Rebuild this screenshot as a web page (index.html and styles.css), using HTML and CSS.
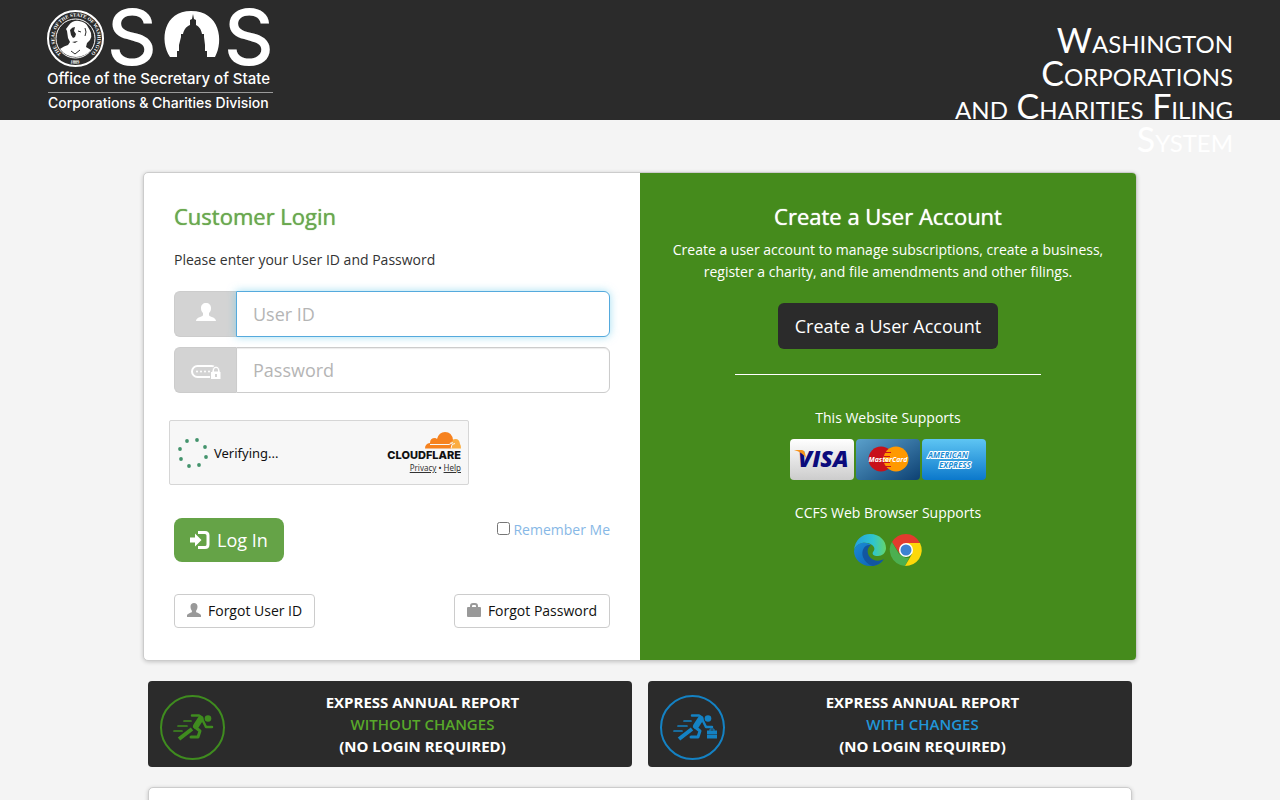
FILE: index.html
```html
<!DOCTYPE html>
<html lang="en">
<head>
    <meta charset="UTF-8">
    <meta name="viewport" content="width=device-width, initial-scale=1">
    <title>Corporations and Charities Filing System</title>
    <link rel="stylesheet" href="styles.css">
</head>
<body>

<header class="header">
    <a href="#" class="logo" aria-label="Office of the Secretary of State">
        <svg width="230" height="106" viewBox="0 0 230 106">
            <defs>
                <path id="ring" d="M14.500 47A21.500 21.500 0 1 1 43.500 47"/>
                <path id="ringYear" d="M21 55.500Q28 58 35 55.500"/>
            </defs>
            <!-- state seal -->
            <circle cx="28.500" cy="31.500" r="27.500" fill="#2b2b2b" stroke="#fff" stroke-width="2"/>
            <circle cx="28.500" cy="31.500" r="19.500" fill="#2b2b2b" stroke="#fff"/>
            <text class="seal-text"><textPath href="#ring">THE SEAL OF THE STATE OF WASHINGTON</textPath></text>
            <text class="seal-text"><textPath href="#ringYear" startOffset="2">1889</textPath></text>
            <path fill="#fff" d="M22 18q4-5 10-4 7 1 9 6 2 3 3 6 1 4-1 7l-3 3-1 4 5 3q-6 7-15 7-10 0-16-8 4-3 8-4l2-3-2-4-1-7-1-2z"/>
            <path fill="#2b2b2b" d="M23 23q2-3 5-3l-1 4 2 3-1 3-2 1-2-3zM25 35l6-1-3 2z"/>
            <path fill="none" stroke="#2b2b2b" d="M31 24l3 1M38 21q2 4 0 8M24 44l4 3 5-4"/>
            <text class="logo-letter" x="60" y="58">S</text>
            <path fill="#fff" d="M123 50c-11-17-6-46 21-46 29 0 33 30 24 46h-8v-6h-2v-6l-1-8v-3h-2c-1-6-4-8-6-9v-5l-2-1-1-5-1 5-2 1v5c-3 1-6 4-7 9h-2v3l-2 8v6h-2v6z"/>
            <text class="logo-letter" x="177" y="58">S</text>
            <text class="logo-line" x="0" y="77">Office of the Secretary of State</text>
            <path stroke="#9a9a9a" d="M1 85.500h225"/>
            <text class="logo-line logo-division" x="1" y="101">Corporations &amp; Charities Division</text>
        </svg>
    </a>
    <div class="site-title">Washington<br>Corporations<br>and Charities Filing<br>System</div>
</header>

<main>
    <div class="login-card">
        <section class="login">
            <h1>Customer Login</h1>
            <p class="intro">Please enter your User ID and Password</p>
            <form>
                <div class="input-group">
                    <label class="addon" for="userId" aria-label="User ID">
                        <svg width="20" height="20" viewBox="0 0 20 20" fill="#fff"><path d="M10 0c3 0 5 2 5 5 0 3-1 4-2 5v2c0 2 7 2 7 6H0c0-4 7-4 7-6v-2C6 9 5 8 5 5c0-3 2-5 5-5z"/></svg>
                    </label>
                    <input type="text" id="userId" placeholder="User ID" autofocus>
                </div>
                <div class="input-group">
                    <label class="addon addon-password" for="password" aria-label="Password">
                        <svg width="30" height="16" viewBox="0 0 30 16">
                            <rect x="1" y="2" width="25" height="11" rx="5.500" fill="none" stroke="#fff" stroke-width="2"/>
                            <g fill="#fff"><circle cx="6" cy="7.500" r="1"/><circle cx="10" cy="7.500" r="1"/><circle cx="14" cy="7.500" r="1"/><circle cx="18" cy="7.500" r="1"/></g>
                            <path fill="#fff" stroke="#d3d3d3" d="M19.500 15.500v-8h1.500V6q1-4 4-4t4 4v1.500h1v8z"/>
                            <path fill="#d3d3d3" d="M23 7.500V6q0-2 2-2t2 2v1.500zM24 10h2v3h-2z"/>
                        </svg>
                    </label>
                    <input type="password" id="password" placeholder="Password">
                </div>

                <div class="turnstile">
                    <svg width="32" height="32" viewBox="0 0 32 32" fill="#43936c">
                        <circle cx="9" cy="4" r="1.900"/><circle cx="19" cy="3" r="1.900"/><circle cx="27" cy="10" r="1.900"/><circle cx="28" cy="20" r="1.900"/>
                        <circle cx="21" cy="28" r="1.900"/><circle cx="11" cy="29" r="1.900"/><circle cx="3" cy="22" r="1.900"/><circle cx="2" cy="12" r="1.900"/>
                    </svg>
                    <span class="verifying">Verifying...</span>
                    <div class="cloudflare">
                        <svg class="cloud" width="36" height="17" viewBox="0 0 36 17">
                            <path fill="#fbad41" d="M25 16.500L27 8q7-3 8 4 1 1 1 4.500z"/>
                            <path fill="#f6821f" d="M0 16.500q0-5 5-5.500 0-5 5-5 1 0 2 1 2-7 8-7 7 0 8 8-1 2-3 3l2 1-1 4.500z"/>
                            <path stroke="#f7f7f7" d="M5 12.500h19l4-2M26 16.500l1-4 3-1" fill="none"/>
                        </svg>
                        <span class="brand">CLOUDFLARE</span>
                        <span class="links"><a href="#">Privacy</a> • <a href="#">Help</a></span>
                    </div>
                </div>

                <div class="row">
                    <button type="submit" class="btn-login">
                        <svg width="20" height="18" viewBox="0 0 20 18"><path fill="#fff" d="M0 6.500h5V2.500l6.500 6.500L5 15.500v-4H0z"/><path fill="none" stroke="#fff" stroke-width="3" d="M8 1.500h7q3 0 3 3v9q0 3-3 3H8"/></svg>
                        Log In
                    </button>
                    <label class="remember"><input type="checkbox"> Remember Me</label>
                </div>
                <div class="row forgot">
                    <button type="button" class="btn-default">
                        <svg width="14" height="14" viewBox="0 0 20 20" fill="#999"><path d="M10 0c3 0 5 2 5 5 0 3-1 5-2 6v2c0 1 7 2 7 5v2H0v-2c0-3 7-4 7-5v-2c-1-1-2-3-2-6 0-3 2-5 5-5z"/></svg>
                        Forgot User ID
                    </button>
                    <button type="button" class="btn-default">
                        <svg width="14" height="14" viewBox="0 0 14 14"><path fill="none" stroke="#999" stroke-width="2" d="M4 6V3q0-2 2-2h2q2 0 2 2v3"/><rect y="4" width="14" height="10" rx="1" fill="#999"/></svg>
                        Forgot Password
                    </button>
                </div>
            </form>
        </section>

        <section class="register">
            <h2>Create a User Account</h2>
            <p>Create a user account to manage subscriptions, create a business,<br>register a charity, and file amendments and other filings.</p>
            <button type="button" class="btn-create">Create a User Account</button>
            <hr>
            <p class="supports">This Website Supports</p>
            <div class="cards">
                <svg width="64" height="41" viewBox="0 0 64 41">
                    <defs>
                        <linearGradient id="visa" x2="0" y2="1"><stop stop-color="#fff"/><stop offset="1" stop-color="#ccc"/></linearGradient>
                        <linearGradient id="master" y2="1"><stop stop-color="#5aa0cb"/><stop offset="1" stop-color="#0d4173"/></linearGradient>
                        <linearGradient id="amex" x2="0" y2="1"><stop stop-color="#5ec5f3"/><stop offset="1" stop-color="#0b78cb"/></linearGradient>
                    </defs>
                    <rect width="64" height="41" rx="4" fill="url(#visa)"/>
                    <text class="visa-text" x="8" y="28">VISA</text>
                    <path fill="#f7941d" d="M4 11h8q2 0 3 3l1 5q-4-6-12-8z"/>
                </svg>
                <svg width="64" height="41" viewBox="0 0 64 41">
                    <rect width="64" height="41" rx="4" fill="url(#master)"/>
                    <circle cx="25" cy="20" r="12.500" fill="#c8101a"/>
                    <circle cx="40" cy="20" r="12.500" fill="#f90"/>
                    <path stroke="#c8101a" d="M29 13.500h6M28 17.500h6M28 23.500h6M29 27.500h6"/>
                    <text class="master-text" x="32" y="23">MasterCard</text>
                </svg>
                <svg width="64" height="41" viewBox="0 0 64 41">
                    <rect width="64" height="41" rx="4" fill="url(#amex)"/>
                    <text class="amex-text" x="6" y="19">AMERICAN</text>
                    <text class="amex-text" x="17" y="29">EXPRESS</text>
                </svg>
            </div>
            <p class="supports">CCFS Web Browser Supports</p>
            <div class="browsers">
                <svg width="32" height="32" viewBox="0 0 32 32">
                    <defs>
                        <linearGradient id="edgeTop"><stop stop-color="#249fde"/><stop offset=".6" stop-color="#2ec5cf"/><stop offset="1" stop-color="#64d66c"/></linearGradient>
                        <linearGradient id="edgeLow" y2="1"><stop stop-color="#1b8bd5"/><stop offset="1" stop-color="#0c5eb0"/></linearGradient>
                    </defs>
                    <path fill="url(#edgeTop)" d="M0 16C1 6 8 0 16 0c10 0 16 7 16 14 0 5-4 8-8 8-5 0-6-2-5-4 2-2 2-5-1-7-5-4-15-3-18 5z"/>
                    <path fill="url(#edgeLow)" d="M0 17C2 8 12 7 17 11c-5 0-7 5-6 9 1 6 7 9 13 8 3 0 5-2 6-3-3 5-8 7-14 7C7 32 0 25 0 17z"/>
                    <path fill="#1256a0" d="M17 11c-7-1-10 6-8 12 2 5 6 8 10 9 5-1 9-4 11-7-5 3-12 2-15-3-2-4-2-8 2-11z"/>
                </svg>
                <svg width="32" height="32" viewBox="0 0 32 32">
                    <path fill="#e33b2e" d="M2 8Q7 0 16 0t14 9H16l-6 11z"/>
                    <path fill="#4caf50" d="M2 8l7 12 7 4h3l-4 8Q5 31 1 22-2 14 2 8z"/>
                    <path fill="#fdd80a" d="M16 9h14q4 8-1 16-5 7-14 7l7-12z"/>
                    <circle cx="16" cy="16" r="7" fill="#fff"/>
                    <circle cx="16" cy="16" r="5.500" fill="#3c82d2"/>
                </svg>
            </div>
        </section>
    </div>

    <div class="express">
        <a href="#" class="express-box without">
            <svg width="65" height="65" viewBox="0 0 65 65">
                <circle cx="32.500" cy="32.500" r="31.500" fill="none" stroke="currentColor" stroke-width="2"/>
                <g id="runner" fill="none" stroke="currentColor" stroke-width="3" stroke-linejoin="round" stroke-linecap="round">
                    <circle cx="48" cy="23.500" r="3.300" fill="currentColor" stroke="none"/>
                    <path d="M42 24l4 8h6" stroke-width="2.500"/>
                    <path d="M32 20.500h7l3 2" stroke-width="2.500"/>
                    <path d="M35 32l5 4-2 6h-7"/>
                    <path stroke-width="6" d="M40.500 24L36 31"/>
                    <path stroke-width="4" stroke-linecap="butt" d="M32 34L19 44"/>
                    <path stroke-width="1.700" d="M24 26h7M18 31h9M14 36h8"/>
                </g>
            </svg>
            <span class="express-text">EXPRESS ANNUAL REPORT<br><span class="accent">WITHOUT CHANGES</span><br>(NO LOGIN REQUIRED)</span>
        </a>
        <a href="#" class="express-box with">
            <svg width="65" height="65" viewBox="0 0 65 65">
                <circle cx="32.500" cy="32.500" r="31.500" fill="none" stroke="currentColor" stroke-width="2"/>
                <use href="#runner"/>
                <path fill="currentColor" d="M47 35.500h10v3.500H47zM47 39.500h10v4H47z"/>
                <path fill="none" stroke="currentColor" d="M50 36v-2h4v2"/>
            </svg>
            <span class="express-text">EXPRESS ANNUAL REPORT<br><span class="accent">WITH CHANGES</span><br>(NO LOGIN REQUIRED)</span>
        </a>
    </div>

    <div class="panel"></div>
</main>
</body>
</html>
```

FILE: styles.css
```css
*{
    box-sizing: border-box;
}
html{
    scrollbar-width: none;
}
body{
    margin: 0;
    background: #f4f4f4;
    color: #333;
    font: 14px/20px "Open Sans", sans-serif;
}
svg{
    display: block;
    flex: none;
    overflow: visible;
}
h1, h2, p{
    margin: 0;
}
button, input{
    font-family: inherit;
}

/* header */
.header{
    height: 120px;
    padding: 7px 47px 0;
    display: flex;
    justify-content: space-between;
    background: #2b2b2b;
}
.logo-letter{
    font: 500 77px Inter, sans-serif;
    fill: #fff;
}
.logo-line{
    font: 500 15px Inter, sans-serif;
    fill: #fff;
}
.logo-division{
    font-size: 14px;
}
.seal-text{
    font: bold 5px "Liberation Serif", serif;
    fill: #fff;
}
.site-title{
    padding-top: 16px;
    color: #fff;
    font: 34px/33px Lato, sans-serif;
    font-variant: small-caps;
    text-align: right;
}

/* login card */
main{
    padding: 52px 16px 0;
}
.login-card{
    max-width: 994px;
    margin: 0 auto;
    display: grid;
    grid-template-columns: 1fr 1fr;
    border: 1px solid #ccc;
    border-radius: 5px;
    box-shadow: 0 1px 4px rgba(0,0,0,.2);
    background: #fff;
    overflow: hidden;
}
.login{
    padding: 30px 30px 32px;
}
.login h1, .register h2{
    font-size: 22px;
    line-height: 26px;
    font-weight: normal;
    color: #6aa84f;
    text-shadow: 0 0 1px #6aa84f;
}
.intro{
    margin: 21px 0;
}
.input-group{
    display: flex;
    height: 46px;
    margin-bottom: 10px;
}
.addon{
    width: 62px;
    display: flex;
    justify-content: center;
    padding-top: 11px;
    background: #d3d3d3;
    border: 1px solid #ccc;
    border-right: 0;
    border-radius: 6px 0 0 6px;
}
.addon-password{
    padding-top: 16px;
}
.input-group input{
    flex: 1;
    min-width: 0;
    padding: 0 16px;
    font-size: 18px;
    color: #555;
    border: 1px solid #ccc;
    border-radius: 0 6px 6px 0;
    box-shadow: inset 0 1px 1px rgba(0,0,0,.08);
    outline: 0;
}
.input-group input::placeholder{
    color: #b5b5b5;
}
.input-group input:focus{
    border-color: #55aadd;
    box-shadow: 0 0 8px rgba(102,200,233,.6);
}
.turnstile{
    width: 300px;
    height: 65px;
    margin: 27px 0 33px -5px;
    padding: 0 7px 0 8px;
    display: flex;
    align-items: center;
    background: #f7f7f7;
    border: 1px solid #d6d6d6;
    border-radius: 2px;
}
.verifying{
    padding-left: 4px;
    color: #111;
    font: 13px/20px "Noto Sans", sans-serif;
}
.cloudflare{
    margin-left: auto;
    padding-top: 2px;
    display: flex;
    flex-direction: column;
    align-items: flex-end;
    color: #111;
}
.brand{
    font: 800 11px/12px Inter, sans-serif;
}
.links{
    font: 8px/14px "Noto Sans", sans-serif;
}
.links a{
    color: #333;
}
.row{
    display: flex;
    justify-content: space-between;
    align-items: flex-start;
}
.btn-login{
    height: 44px;
    padding: 0 16px;
    display: flex;
    align-items: center;
    gap: 7px;
    font-size: 18px;
    color: #fff;
    background: #65a347;
    border: 0;
    border-radius: 8px;
}
.remember{
    display: flex;
    gap: 3px;
    padding-top: 2px;
    color: #87b8e6;
}
.remember input{
    width: 13px;
    height: 13px;
    margin: 2px 0 0;
}
.forgot{
    margin-top: 32px;
}
.btn-default{
    height: 34px;
    padding: 0 12px 2px;
    display: flex;
    align-items: center;
    gap: 7px;
    font-size: 14px;
    color: #111;
    background: #fff;
    border: 1px solid #ccc;
    border-radius: 4px;
}

/* green side */
.register{
    padding: 30px;
    color: #fff;
    text-align: center;
    line-height: 22px;
    background: #458b1c;
}
.register h2{
    margin-bottom: 10px;
    color: #fff;
    text-shadow: 0 0 1px #fff;
}
.btn-create{
    height: 46px;
    margin-top: 20px;
    padding: 0 17px;
    font-size: 18px;
    color: #fff;
    background: #2b2b2b;
    border: 0;
    border-radius: 6px;
}
.register hr{
    width: 70%;
    margin: 25px auto 32px;
    border: 0;
    border-top: 1px solid #fff;
}
.cards, .browsers{
    display: flex;
    justify-content: center;
    gap: 2px;
    margin: 10px 0 22px;
}
.browsers{
    gap: 4px;
}
.visa-text{
    font: italic 800 23px "Open Sans", sans-serif;
    fill: #0b0b7c;
}
.master-text{
    font: italic bold 7px "Open Sans", sans-serif;
    fill: #fff;
    text-anchor: middle;
}
.amex-text{
    font: italic bold 8px "Open Sans", sans-serif;
    fill: #1b8ed6;
    stroke: #fff;
    stroke-width: 2px;
    paint-order: stroke;
}

/* express reports */
.express{
    max-width: 984px;
    margin: 20px auto;
    display: grid;
    grid-template-columns: 1fr 1fr;
    gap: 16px;
}
.express-box{
    height: 86px;
    padding: 6px 12px 0;
    display: flex;
    align-items: center;
    background: #2b2b2b;
    border-radius: 4px;
    text-decoration: none;
}
.express-text{
    flex: 1;
    margin-top: -6px;
    text-align: center;
    color: #fff;
    font-size: 15px;
    line-height: 22px;
    font-weight: bold;
}
.accent{
    font-weight: 600;
}
.without{
    color: #3f8c1f;
}
.without .accent{
    color: #58a82a;
}
.with{
    color: #1482c4;
}
.with .accent{
    color: #2196d8;
}
.panel{
    max-width: 984px;
    min-height: 120px;
    margin: 0 auto;
    background: #fff;
    border: 1px solid #ccc;
    border-radius: 5px;
    box-shadow: 0 1px 4px rgba(0,0,0,.2);
}
```
